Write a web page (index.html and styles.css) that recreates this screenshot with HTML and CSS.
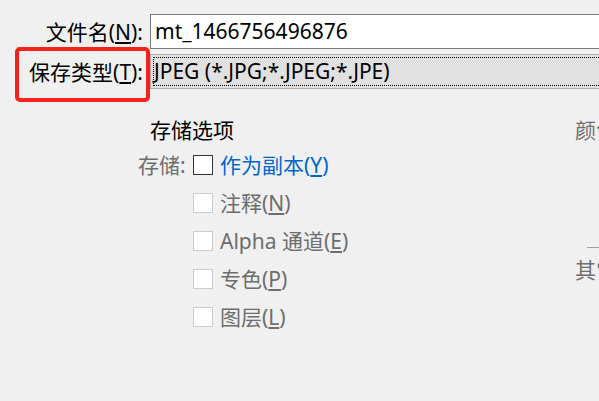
FILE: index.html
```html
<!DOCTYPE html>
<html lang="zh-CN">
<head>
<meta charset="utf-8">
<link rel="stylesheet" href="styles.css">
</head>
<body>
<div class="dialog">
  <div class="field name-field">
    <label class="field-label">文件名(<u>N</u>):</label>
    <div class="textbox">mt_1466756496876</div>
  </div>
  <div class="field type-field">
    <label class="field-label">保存类型(<u>T</u>):</label>
    <div class="combo"><span class="combo-inner">JPEG (*.JPG;*.JPEG;*.JPE)</span></div>
  </div>
  <div class="highlight"></div>

  <div class="options">
    <div class="save-opts">
      <div class="section-title">存储选项</div>
      <div class="opt-grid">
        <span class="opt-label">存储:</span>
        <span class="check enabled"></span>
        <span class="opt-text active">作为副本(<u>Y</u>)</span>

        <span></span>
        <span class="check"></span>
        <span class="opt-text">注释(<u>N</u>)</span>

        <span></span>
        <span class="check"></span>
        <span class="opt-text">Alpha 通道(<u>E</u>)</span>

        <span></span>
        <span class="check"></span>
        <span class="opt-text">专色(<u>P</u>)</span>

        <span></span>
        <span class="check"></span>
        <span class="opt-text">图层(<u>L</u>)</span>
      </div>
    </div>
    <div class="color-opts">
      <div class="side-title">颜色</div>
      <div class="side-rule"></div>
      <div class="side-text">其它</div>
    </div>
  </div>
  <div class="bottom-text">缩览图(<u>U</u>)</div>
</div>
</body>
</html>
```

FILE: styles.css
```css
html, body {
  margin: 0;
  padding: 0;
  background: #f0f0f0;
}
body {
  width: 599px;
  height: 401px;
  overflow: hidden;
  font-family: "Noto Sans", "Noto Sans CJK SC", sans-serif;
  font-size: 21px;
  color: #000;
}
.dialog {
  position: relative;
  width: 599px;
  height: 401px;
  overflow: hidden;
}
.field {
  display: flex;
  align-items: center;
}
.name-field {
  margin-top: 14px;
  height: 35px;
}
.type-field {
  margin-top: 5px;
  height: 35px;
}
.field-label {
  width: 143px;
  margin-right: 7px;
  text-align: right;
  white-space: nowrap;
  line-height: 24px;
}
.textbox {
  flex: 1;
  height: 33px;
  border: 1px solid #7a7a7a;
  border-right: none;
  background: #fff;
  box-sizing: content-box;
  padding-left: 4px;
  line-height: 33px;
  white-space: nowrap;
}
.combo {
  flex: 1;
  height: 35px;
  border: 1px solid #adadad;
  border-right: none;
  background: #e1e1e1;
  padding: 2px 0 2px 2px;
  box-sizing: border-box;
  display: flex;
  overflow: hidden;
}
.combo-inner {
  flex: 1;
  border: 1px dotted #000;
  border-right: none;
  line-height: 27px;
  white-space: nowrap;
}
.highlight {
  position: absolute;
  left: 15px;
  top: 47px;
  width: 135px;
  height: 55px;
  border: 4px solid #f5211d;
  border-radius: 5px;
  box-sizing: border-box;
}
.options {
  display: flex;
  margin-top: 28px;
}
.save-opts {
  flex: 0 0 437px;
  margin-left: 138px;
}
.section-title {
  margin-left: 12px;
  height: 26px;
  line-height: 26px;
  white-space: nowrap;
}
.opt-grid {
  margin-top: 12px;
  display: grid;
  grid-template-columns: 48px 20px auto;
  grid-auto-rows: 20px;
  column-gap: 7px;
  row-gap: 18px;
  align-items: center;
}
.opt-label {
  color: #6d6d6d;
  line-height: 20px;
  white-space: nowrap;
}
.check {
  width: 20px;
  height: 20px;
  box-sizing: border-box;
  border: 1px solid #cccccc;
  background: #fff;
}
.check.enabled {
  border-color: #333;
}
.opt-text {
  color: #6d6d6d;
  line-height: 20px;
  white-space: nowrap;
}
.opt-text.active {
  color: #0066cc;
}
.color-opts {
  flex: 0 0 40px;
  color: #6d6d6d;
}
.side-title {
  height: 26px;
  line-height: 26px;
  white-space: nowrap;
}
.side-rule {
  margin-top: 104px;
  margin-left: 12px;
  height: 1px;
  background: #a0a0a0;
}
.side-text {
  margin-top: 10px;
  line-height: 24px;
  white-space: nowrap;
}
.bottom-text {
  position: absolute;
  left: 0;
  top: 397px;
  white-space: nowrap;
}
```
